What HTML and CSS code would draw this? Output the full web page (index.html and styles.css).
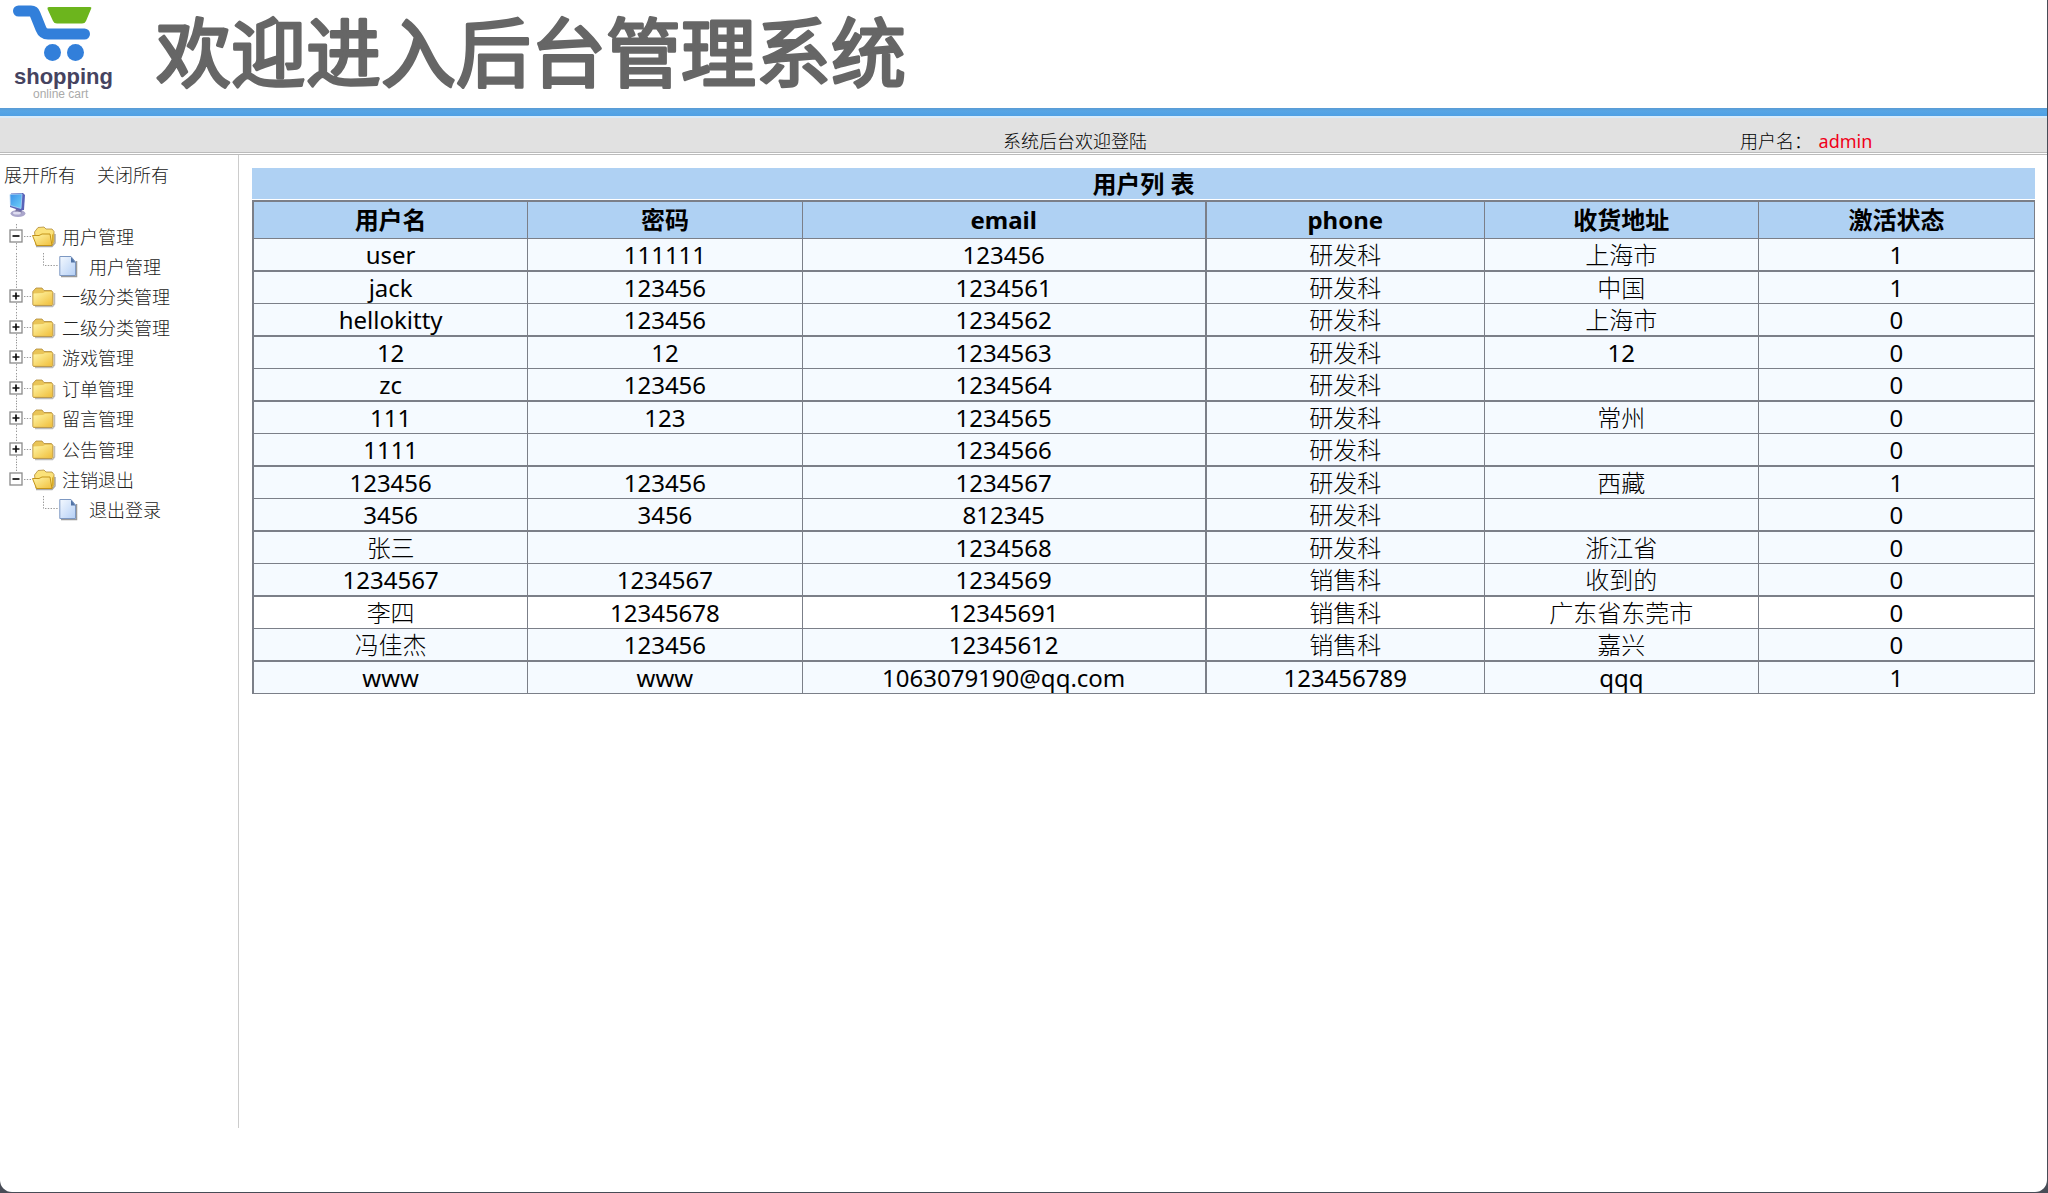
FILE: index.html
```
<!DOCTYPE html>
<html lang="zh-CN">
<head>
    <meta charset="UTF-8">
    <meta name="viewport" content="width=device-width, initial-scale=1.0">
    <title>后台管理系统</title>
    <link rel="stylesheet" href="styles.css">
</head>
<body>
    <!-- shared icons -->
    <svg class="defs" width="0" height="0" aria-hidden="true">
        <defs>
            <linearGradient id="yellow" x1="0" y1="0" x2="1" y2="1">
                <stop offset="0" stop-color="#fff6a8"/>
                <stop offset="1" stop-color="#f0bf3c"/>
            </linearGradient>
            <linearGradient id="paper" x1="0" y1="0" x2="1" y2="1">
                <stop offset="0" stop-color="#f4f9ff"/>
                <stop offset="1" stop-color="#b4cff5"/>
            </linearGradient>
            <linearGradient id="screen" x1="0" y1="0" x2="1" y2="1">
                <stop offset="0" stop-color="#3b8fe8"/>
                <stop offset="1" stop-color="#6fd4fa"/>
            </linearGradient>
            <symbol id="plus" viewBox="0 0 24 30">
                <path d="M8.5 0V8M8.5 22V30M16 15.5H24" stroke="#999" stroke-dasharray="1.4 1.4" fill="none"/>
                <rect x="2" y="9" width="12" height="12" fill="#fff" stroke="#8a8a8a" stroke-width="1.3"/>
                <path d="M4.5 15H11.5M8 11.5V18.5" stroke="#111" stroke-width="1.7"/>
            </symbol>
            <symbol id="minus" viewBox="0 0 24 30">
                <path d="M8.5 3V8M8.5 22V30M16 15.5H24" stroke="#999" stroke-dasharray="1.4 1.4" fill="none"/>
                <rect x="2" y="9" width="12" height="12" fill="#fff" stroke="#8a8a8a" stroke-width="1.3"/>
                <path d="M4.5 15H11.5" stroke="#111" stroke-width="1.7"/>
            </symbol>
            <symbol id="minus-last" viewBox="0 0 24 30">
                <path d="M8.5 0V8M16 15.5H24" stroke="#999" stroke-dasharray="1.4 1.4" fill="none"/>
                <rect x="2" y="9" width="12" height="12" fill="#fff" stroke="#8a8a8a" stroke-width="1.3"/>
                <path d="M4.5 15H11.5" stroke="#111" stroke-width="1.7"/>
            </symbol>
            <symbol id="line" viewBox="0 0 24 30">
                <path d="M8.5 2V28" stroke="#999" stroke-dasharray="1.4 1.4" fill="none"/>
            </symbol>
            <symbol id="elbow" viewBox="0 0 27 30">
                <path d="M11.5 2V14.5H27" stroke="#999" stroke-dasharray="1.4 1.4" fill="none"/>
            </symbol>
            <symbol id="folder" viewBox="0 0 24 24">
                <path d="M3 22.500H20.500L22.500 20V9" stroke="#bbb" stroke-width="1.5" fill="none"/>
                <path d="M.8 7.500L4 4H10L12 6.500H19.500L21 8.500V20.500L20 21.500H1.500L.8 20.500Z" fill="#e9c457" stroke="#b08a3a" stroke-width=".8"/>
                <path d="M1.500 9.500L11 9L13 8H20V20.500H1.500Z" fill="url(#yellow)"/>
            </symbol>
            <symbol id="folder-open" viewBox="0 0 24 24">
                <path d="M4 22.500H20L23 19V10" stroke="#aaa" stroke-width="1.5" fill="none"/>
                <path d="M3 12L2.500 8L6 3.500L12 3L14 5H20L22 7.500V18L20 21.500H4Z" fill="#fbe27a" stroke="#b08a3a" stroke-width=".8"/>
                <path d="M.5 11.500H7L10 10H18L20 21.500H4.500Z" fill="url(#yellow)" stroke="#c49418" stroke-width="1"/>
                <path d="M20 11L21.500 9V17L20 21Z" fill="#d9ab25"/>
            </symbol>
            <symbol id="page" viewBox="0 0 20 24">
                <path d="M2 22.5H17.5V7" stroke="#999" stroke-width="1.5" fill="none"/>
                <path d="M.8 2.500H12L16.500 8V21.500H.8Z" fill="url(#paper)" stroke="#7d98c2"/>
                <path d="M12 3L16.500 8.500H12Z" fill="#5173a5"/>
            </symbol>
        </defs>
    </svg>

    <header class="banner">
        <svg class="logo" viewBox="0 0 120 108" role="img" aria-label="shopping online cart">
            <path d="M18.500 11H31Q34 11 35 14L41 29Q43 34 48 34H84.500" fill="none" stroke="#327fda" stroke-width="11" stroke-linecap="round"/>
            <path d="M49 7H90Q92 7 91 9L86 21Q85 23.500 82 23.500H57Q54 23.500 53 21L47.500 9Q47 7 49 7Z" fill="#6cb51d"/>
            <circle cx="52.500" cy="52.500" r="8.500" fill="#327fda"/>
            <circle cx="75.500" cy="52.500" r="8.500" fill="#327fda"/>
            <text class="logo-name" x="14" y="84">shopping</text>
            <text class="logo-sub" x="33" y="98">online cart</text>
        </svg>
        <h1>
            <svg class="title" viewBox="0 0 780 108">
                <text x="0" y="81">欢迎进入后台管理系统</text>
            </svg>
        </h1>
    </header>

    <div class="status">
        <span class="welcome">系统后台欢迎登陆</span>
        <span>用户名： <span class="admin">admin</span></span>
    </div>

    <div class="layout">
        <nav class="sidebar">
            <div class="actions">
                <a href="#">展开所有</a>
                <a href="#">关闭所有</a>
            </div>
            <svg class="computer" width="20" height="26" viewBox="0 0 20 26" aria-hidden="true">
                <ellipse cx="10" cy="21.500" rx="7.500" ry="3.500" fill="#aaa6cb"/>
                <path d="M8 16L14 17L13 22H7Z" fill="#77729f"/>
                <path d="M3 1.500L15 1L17 3L16 18L12 18.500L2 15Z" fill="#5a63b8"/>
                <path d="M2 2.500L14 2L13 16.500L2.500 13.500Z" fill="url(#screen)" stroke="#a8d2f5" stroke-width=".8"/>
                <ellipse cx="9" cy="21" rx="4" ry="1.500" fill="#dedcf0"/>
            </svg>
            <ul class="tree">
                <li>
                    <div class="node">
                        <button aria-label="收起"><svg width="24" height="30"><use href="#minus"/></svg></button>
                        <svg width="24" height="24"><use href="#folder-open"/></svg>
                        <a href="#">用户管理</a>
                    </div>
                    <div class="node leaf">
                        <svg width="24" height="30"><use href="#line"/></svg>
                        <svg width="27" height="30"><use href="#elbow"/></svg>
                        <svg width="20" height="24"><use href="#page"/></svg>
                        <a href="#">用户管理</a>
                    </div>
                </li>
                <li>
                    <div class="node">
                        <button aria-label="展开"><svg width="24" height="30"><use href="#plus"/></svg></button>
                        <svg width="24" height="24"><use href="#folder"/></svg>
                        <a href="#">一级分类管理</a>
                    </div>
                </li>
                <li>
                    <div class="node">
                        <button aria-label="展开"><svg width="24" height="30"><use href="#plus"/></svg></button>
                        <svg width="24" height="24"><use href="#folder"/></svg>
                        <a href="#">二级分类管理</a>
                    </div>
                </li>
                <li>
                    <div class="node">
                        <button aria-label="展开"><svg width="24" height="30"><use href="#plus"/></svg></button>
                        <svg width="24" height="24"><use href="#folder"/></svg>
                        <a href="#">游戏管理</a>
                    </div>
                </li>
                <li>
                    <div class="node">
                        <button aria-label="展开"><svg width="24" height="30"><use href="#plus"/></svg></button>
                        <svg width="24" height="24"><use href="#folder"/></svg>
                        <a href="#">订单管理</a>
                    </div>
                </li>
                <li>
                    <div class="node">
                        <button aria-label="展开"><svg width="24" height="30"><use href="#plus"/></svg></button>
                        <svg width="24" height="24"><use href="#folder"/></svg>
                        <a href="#">留言管理</a>
                    </div>
                </li>
                <li>
                    <div class="node">
                        <button aria-label="展开"><svg width="24" height="30"><use href="#plus"/></svg></button>
                        <svg width="24" height="24"><use href="#folder"/></svg>
                        <a href="#">公告管理</a>
                    </div>
                </li>
                <li>
                    <div class="node">
                        <button aria-label="收起"><svg width="24" height="30"><use href="#minus-last"/></svg></button>
                        <svg width="24" height="24"><use href="#folder-open"/></svg>
                        <a href="#">注销退出</a>
                    </div>
                    <div class="node leaf">
                        <svg width="24" height="30"></svg>
                        <svg width="27" height="30"><use href="#elbow"/></svg>
                        <svg width="20" height="24"><use href="#page"/></svg>
                        <a href="#">退出登录</a>
                    </div>
                </li>
            </ul>
        </nav>

        <main class="content">
            <h2>用户列 表</h2>
            <table>
                <colgroup>
                    <col class="col-normal">
                    <col class="col-normal">
                    <col class="col-email">
                    <col class="col-phone">
                    <col class="col-normal">
                    <col>
                </colgroup>
                <thead>
                    <tr><th>用户名</th><th>密码</th><th>email</th><th>phone</th><th>收货地址</th><th>激活状态</th></tr>
                </thead>
                <tbody>
                    <tr><td>user</td><td>111111</td><td>123456</td><td class="zh">研发科</td><td class="zh">上海市</td><td>1</td></tr>
                    <tr><td>jack</td><td>123456</td><td>1234561</td><td class="zh">研发科</td><td class="zh">中国</td><td>1</td></tr>
                    <tr><td>hellokitty</td><td>123456</td><td>1234562</td><td class="zh">研发科</td><td class="zh">上海市</td><td>0</td></tr>
                    <tr><td>12</td><td>12</td><td>1234563</td><td class="zh">研发科</td><td>12</td><td>0</td></tr>
                    <tr><td>zc</td><td>123456</td><td>1234564</td><td class="zh">研发科</td><td></td><td>0</td></tr>
                    <tr><td>111</td><td>123</td><td>1234565</td><td class="zh">研发科</td><td class="zh">常州</td><td>0</td></tr>
                    <tr><td>1111</td><td></td><td>1234566</td><td class="zh">研发科</td><td></td><td>0</td></tr>
                    <tr><td>123456</td><td>123456</td><td>1234567</td><td class="zh">研发科</td><td class="zh">西藏</td><td>1</td></tr>
                    <tr><td>3456</td><td>3456</td><td>812345</td><td class="zh">研发科</td><td></td><td>0</td></tr>
                    <tr><td class="zh">张三</td><td></td><td>1234568</td><td class="zh">研发科</td><td class="zh">浙江省</td><td>0</td></tr>
                    <tr><td>1234567</td><td>1234567</td><td>1234569</td><td class="zh">销售科</td><td class="zh">收到的</td><td>0</td></tr>
                    <tr class="active"><td class="zh">李四</td><td>12345678</td><td>12345691</td><td class="zh">销售科</td><td class="zh">广东省东莞市</td><td>0</td></tr>
                    <tr><td class="zh">冯佳杰</td><td>123456</td><td>12345612</td><td class="zh">销售科</td><td class="zh">嘉兴</td><td>0</td></tr>
                    <tr><td>www</td><td>www</td><td>1063079190@qq.com</td><td>123456789</td><td>qqq</td><td>1</td></tr>
                </tbody>
            </table>
        </main>
    </div>
</body>
</html>
```
FILE: styles.css
```
* {
  box-sizing: border-box;
}
html {
  background-color: #484c56;
}
body {
  display: flex;
  flex-direction: column;
  min-height: calc(100vh - 1px);
  margin: 0 1px 1px 0;
  padding-bottom: 64px;
  background-color: #fff;
  border-radius: 0 0 12px 12px;
  font-family: "Noto Sans", "Noto Sans CJK SC", sans-serif;
  font-size: 18px;
  color: #000;
}
a {
  color: #222;
  text-decoration: none;
}
.defs {
  position: absolute;
}

/* top banner */
.banner {
  display: flex;
  height: 118px;
  border-bottom: 2px solid #d8ebfa;
  background: linear-gradient(#fff 108px, #5b9bd3 108px, #55a5e6 111px, #4fa0e4 116px);
}
.logo {
  width: 120px;
  height: 108px;
}
.logo-name {
  font: bold 22px "Liberation Sans", sans-serif;
  fill: #45435f;
}
.logo-sub {
  font: 12px "Liberation Sans", sans-serif;
  fill: #aaa;
}
h1 {
  margin: 0 0 0 36px;
}
.title {
  display: block;
  width: 780px;
  height: 108px;
  overflow: visible;
  font-size: 75px;
  font-weight: 400;
  fill: #666;
  stroke: #666;
  stroke-width: 3px;
  stroke-linejoin: round;
}
.status {
  display: grid;
  grid-template-columns: 49% 36% 15%;
  height: 37px;
  padding-top: 10px;
  border-bottom: 3px double #bbb;
  background: #e1e1e1;
  background-clip: padding-box;
  font-weight: 300;
  line-height: 26px;
}
.welcome {
  grid-column: 2;
}
.admin {
  margin-left: 2px;
  font-weight: 400;
  color: #f00019;
}

/* menu tree */
.layout {
  display: flex;
  flex: 1;
}
.sidebar {
  flex: 0 0 239px;
  border-right: 1px solid #ccc;
  font-weight: 300;
}
.actions {
  display: flex;
  gap: 21px;
  padding: 7px 4px 0;
  line-height: 26px;
}
.computer {
  display: block;
  margin: 4px 8px 2px;
}
.tree {
  margin: 0;
  padding: 0 8px;
  list-style: none;
}
.node {
  display: flex;
  align-items: center;
  height: 31px;
}
.tree li:nth-child(even) .node,
.leaf {
  height: 30px;
}
.node button {
  display: flex;
  padding: 0;
  border: none;
  background: none;
  cursor: pointer;
}
.node a {
  margin-left: 6px;
}
.leaf a {
  margin-left: 10px;
}

/* user list */
.content {
  flex: 1;
  min-width: 0;
  padding: 13px 12px 0 13px;
}
h2 {
  margin: 0 0 1px;
  background-color: #afd1f3;
  font-size: 24px;
  line-height: 31px;
  text-align: center;
}
table {
  width: 100%;
  table-layout: fixed;
  border-collapse: separate;
  border-spacing: 0;
  border: solid #7b7f88;
  border-width: 2px 0 0 2px;
  font-size: 24px;
  line-height: 31px;
  text-align: center;
}
.col-normal {
  width: 15.4%;
}
.col-email {
  width: 22.7%;
}
.col-phone {
  width: 15.6%;
}
th,
td {
  height: 32px;
  padding: 0;
  border: solid #7b7f88;
  border-width: 0 1px 1px 0;
}
th {
  height: 37px;
  padding-bottom: 2px;
  background-color: #afd1f3;
}
td {
  background-color: #f5faff;
}
.zh {
  font-weight: 300;
}
th:nth-child(3),
td:nth-child(3) {
  border-right-width: 2px;
}
tbody tr:nth-child(odd) td {
  height: 33px;
  border-bottom-width: 2px;
}
.active td {
  background-color: #fff;
}
```
